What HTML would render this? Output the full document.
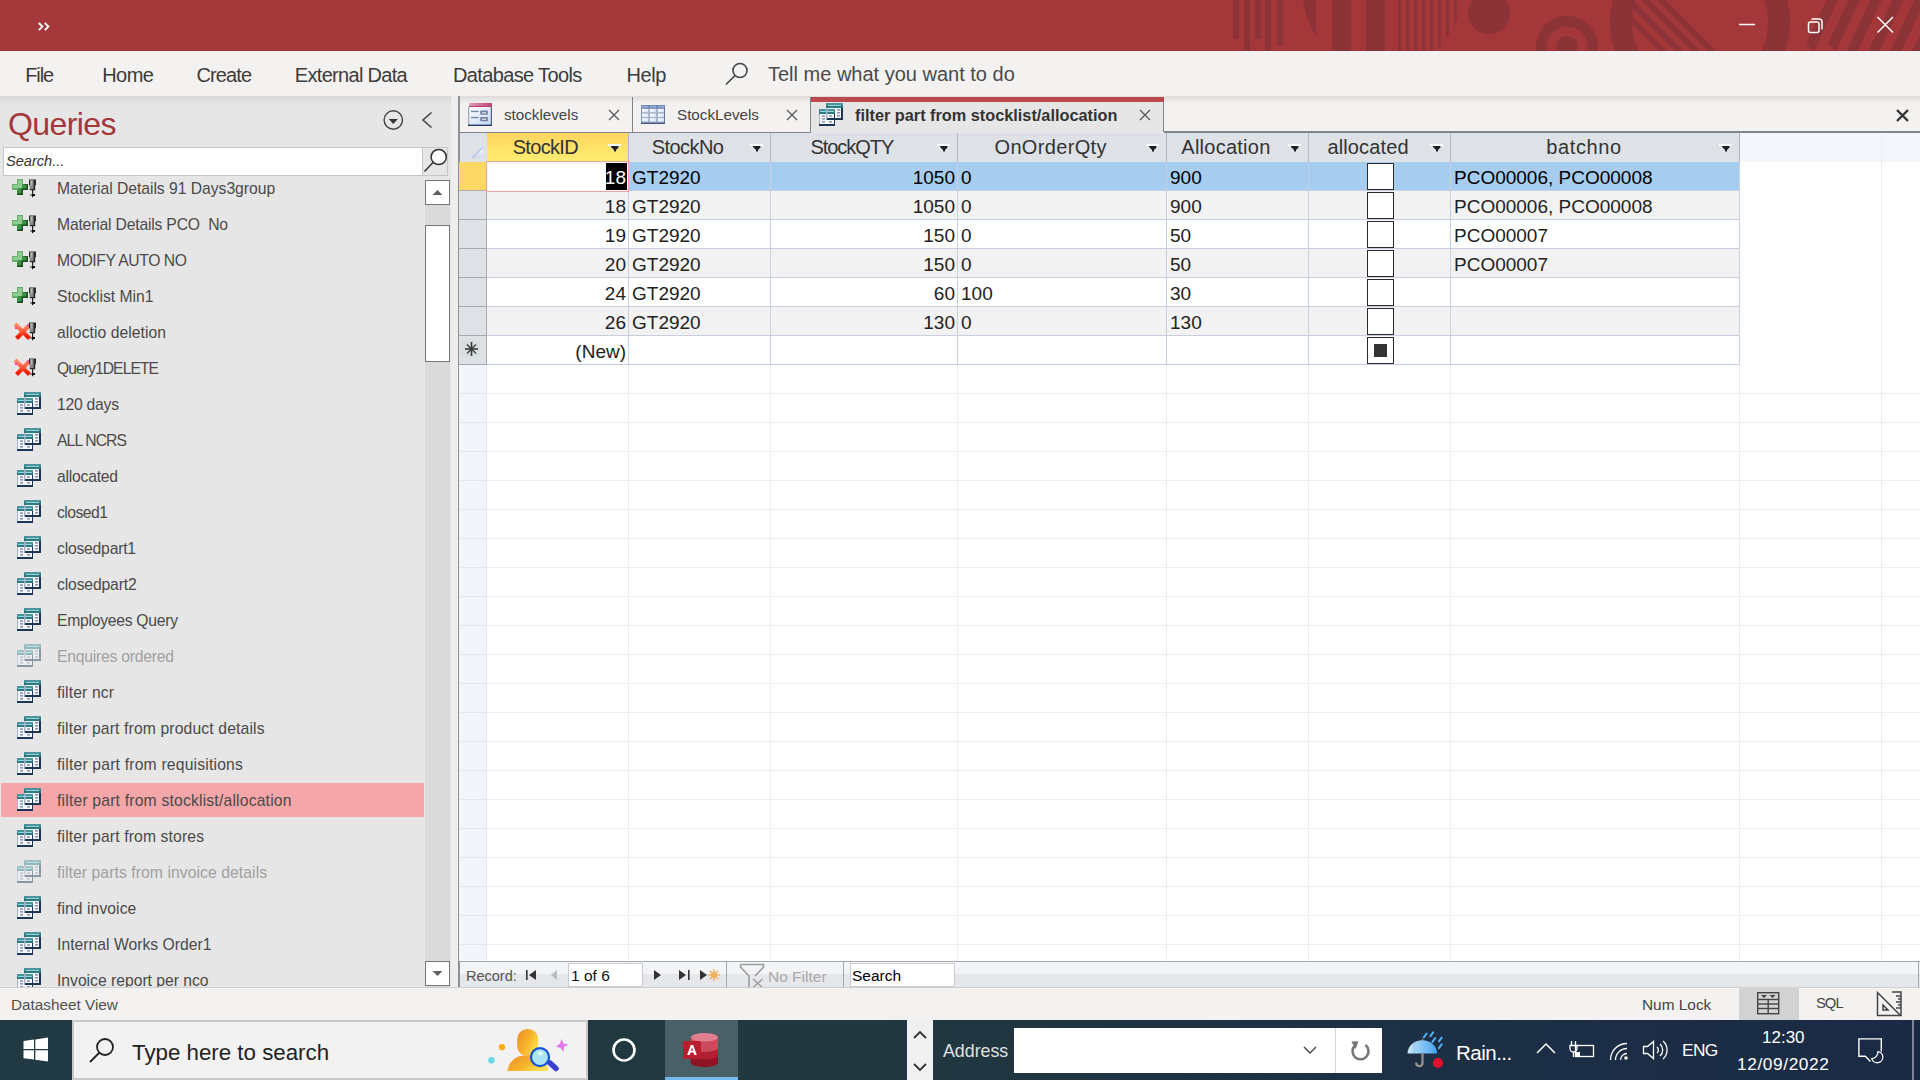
<!DOCTYPE html><html><head><meta charset="utf-8"><style>
*{margin:0;padding:0;box-sizing:border-box}
html,body{width:1920px;height:1080px;overflow:hidden;background:#f3f2f1;font-family:"Liberation Sans",sans-serif;position:relative}
.a{position:absolute}
.t{position:absolute;white-space:nowrap;line-height:1}
#title{left:0;top:0;width:1920px;height:51px;background:#a4373a;overflow:hidden}
#ribbon{left:0;top:51px;width:1920px;height:45px;background:#f3f2f1}
.rt{position:absolute;top:65px;font-size:20px;color:#3b3b3b;white-space:nowrap;line-height:1}
#nav{left:0;top:96px;width:451px;height:891px;background:#e6e6e6;overflow:hidden}
.ni{position:absolute;left:57px;font-size:15.7px;color:#4a4a4a;white-space:nowrap;line-height:36px;height:36px}
.ico{position:absolute;left:8px}
.gc{position:absolute;font-size:19px;color:#222;white-space:nowrap;line-height:1}
.hc{position:absolute;font-size:19px;color:#333;white-space:nowrap;line-height:1;text-align:center}
</style></head><body>
<div id="title" class="a"><svg width="1920" height="51" style="position:absolute;left:0;top:0">
<defs><clipPath id="inner"><circle cx="1700" cy="22" r="68"/></clipPath></defs>
<g fill="#8c3338">
<rect x="1233" y="0" width="6" height="39"/>
<rect x="1244" y="0" width="6" height="51"/>
<rect x="1255" y="0" width="6" height="39"/>
<rect x="1265" y="0" width="6" height="51"/>
<rect x="1277" y="0" width="6" height="46"/>
<path d="M1303,0 Q1306,22 1316,36 L1316,0 Z"/>
<rect x="1332" y="0" width="19" height="51"/>
<rect x="1366" y="0" width="19" height="51"/>
<rect x="1398" y="0" width="3" height="51"/>
<rect x="1406" y="0" width="3" height="51"/>
<rect x="1414" y="0" width="3" height="51"/>
<rect x="1422" y="0" width="3" height="51"/>
<rect x="1430" y="0" width="3" height="51"/>
<path d="M1438,0 h3 v45 l-3,3 Z"/>
<path d="M1446,0 h3 v35 l-3,4 Z"/>
<path d="M1454,0 h3 v20 l-3,5 Z"/>
<circle cx="1489" cy="13" r="21"/>
<path fill-rule="evenodd" d="M1536,47 a31,31 0 1,0 62,0 a31,31 0 1,0 -62,0 Z M1546.5,47 a20.5,20.5 0 1,0 41,0 a20.5,20.5 0 1,0 -41,0 Z"/>
<circle cx="1567" cy="47" r="11"/>
<path fill-rule="evenodd" d="M1610,22 a90,90 0 1,0 180,0 a90,90 0 1,0 -180,0 Z M1632,22 a68,68 0 1,0 136,0 a68,68 0 1,0 -136,0 Z"/>
<g clip-path="url(#inner)">
<path d="M1588,-20 h8 l80,80 h-8 Z"/>
<path d="M1604.5,-20 h8 l80,80 h-8 Z"/>
<path d="M1621,-20 h8 l80,80 h-8 Z"/>
<path d="M1637,-20 h8 l80,80 h-8 Z"/>
</g>
<path d="M1826.7,0 H1837.9 L1813.8,51.3 L1806.2,43.6 Z"/>
<path d="M1848.6,0 H1859.8 L1835.7,51.3 L1828.1,43.6 Z"/>
<path d="M1870.5,0 H1881.7 L1857.7,51 L1846.5,51 Z"/>
<path d="M1892.4,0 H1903.6 L1879.6,51 L1868.4,51 Z"/>
<path d="M1914.3,0 H1925.5 L1901.5,51 L1890.3,51 Z"/>
<path d="M1936.2,0 H1947.4 L1923.4,51 L1912.2,51 Z"/>
</g>
<g stroke="#fff" fill="none" stroke-width="1.5">
<line x1="1739" y1="24.5" x2="1755" y2="24.5"/>
<rect x="1808.5" y="22" width="10.5" height="10.5" rx="2"/>
<path d="M1811.5,19 h7.5 a3,3 0 0 1 3,3 v7.5"/>
<path d="M1877.5,17 L1893,32.5 M1893,17 L1877.5,32.5"/>
</g>
<g stroke="#fff" fill="none" stroke-width="1.9">
<path d="M38.8,23 l3.6,3.6 l-3.6,3.6 M44.8,23 l3.6,3.6 l-3.6,3.6"/>
</g>
</svg></div>
<div id="ribbon" class="a"></div>
<div class="rt" style="left:25.2px;letter-spacing:-1.100px">File</div>
<div class="rt" style="left:102.2px;letter-spacing:-0.533px">Home</div>
<div class="rt" style="left:196.5px;letter-spacing:-0.900px">Create</div>
<div class="rt" style="left:294.8px;letter-spacing:-0.688px">External Data</div>
<div class="rt" style="left:453.0px;letter-spacing:-0.635px">Database Tools</div>
<div class="rt" style="left:626.5px;letter-spacing:-0.433px">Help</div>
<div class="rt" style="left:768px;font-size:20px;top:64px;color:#4a4a4a">Tell me what you want to do</div>
<svg class="a" style="left:722px;top:60px" width="30" height="30"><g stroke="#444" stroke-width="1.6" fill="none"><circle cx="18" cy="10.5" r="7"/><line x1="13" y1="15.5" x2="4" y2="24.5"/></g></svg>
<div id="nav" class="a"></div>
<div class="a" style="left:0;top:96px;width:1920px;height:8px;background:linear-gradient(#d6d6d6,rgba(230,230,230,0))"></div>
<div class="a" style="left:451px;top:96px;width:7px;height:891px;background:#eeeeee"></div>
<div class="a" style="left:458px;top:96px;width:2px;height:891px;background:#8d9096"></div>
<div class="t" style="left:8px;top:107.5px;font-size:32px;letter-spacing:-0.6px;color:#a4373a">Queries</div>
<svg class="a" style="left:375px;top:104px" width="70" height="32"><g stroke="#444" stroke-width="1.4" fill="none"><circle cx="18.3" cy="16" r="9.2"/><path d="M56.5,8.5 L48,16 L56.5,23.5" stroke-width="1.6"/></g><path d="M13.8,15 h9 l-4.5,5 Z" fill="#333"/></svg>
<div class="a" style="left:3px;top:147px;width:445px;height:29px;background:#fff;border:1px solid #c6c6c6"></div>
<div class="a" style="left:422px;top:147px;width:26px;height:29px;background:#e6e6e6;border:1px solid #c6c6c6"></div>
<svg class="a" style="left:420px;top:146px" width="30" height="30"><circle cx="18.7" cy="11" r="7.6" fill="#fafafa" stroke="#333" stroke-width="1.5"/><line x1="13" y1="16.5" x2="4.5" y2="25.5" stroke="#333" stroke-width="1.5"/></svg>
<div class="t" style="left:6px;top:153.5px;font-size:14.6px;font-style:italic;color:#333">Search...</div>
<div class="a" style="left:425px;top:180px;width:25px;height:807px;background:#dadada"></div>
<div class="a" style="left:425px;top:180px;width:25px;height:25px;background:#fff;border:1px solid #767676"></div>
<svg class="a" style="left:425px;top:180px" width="25" height="25"><path d="M7.5,15 h10 l-5,-5 Z" fill="#606060"/></svg>
<div class="a" style="left:425px;top:225px;width:25px;height:137px;background:#fff;border:1px solid #767676"></div>
<div class="a" style="left:425px;top:961px;width:25px;height:25px;background:#fff;border:1px solid #767676"></div>
<svg class="a" style="left:425px;top:961px" width="25" height="25"><path d="M7.5,10 h10 l-5,5 Z" fill="#606060"/></svg>
<div class="a" style="left:1px;top:783px;width:423px;height:34px;background:#f4a6a9"></div>
<div class="a" style="left:0;top:176px;width:425px;height:811px;overflow:hidden">
<svg class="a" style="left:12px;top:3px" width="26" height="20"><path d="M5,0 h6 v5 h5 v6 h-5 v5 h-6 v-5 h-5 v-6 h5 Z" fill="#3f8f45"/>
<path d="M5,0 h6 v5 h-6 Z M0,5 h6 v6 h-6 Z" fill="#66b06a"/>
<path d="M6,1 h4 v8 h-4 Z M1,6 h9 v3 h-9 Z" fill="#8ccc8e"/>
<path d="M11,5 h5 v6 h-5 v5 h-6 v-1.5 h4.5 v-5 h5 v-3 h1.5" fill="#0f3d14" opacity="0.8"/><g transform="translate(17,0)">
<path d="M0,0.5 h7 v5.5 l-0.8,0.5 v4.8 h-5.4 v-4.8 l-0.8,-0.5 Z" fill="#2a2a2a"/>
<rect x="1" y="1" width="3.5" height="9" fill="#8a8a8a"/>
<rect x="1.8" y="1.5" width="1.5" height="5" fill="#b5b5b5"/>
<rect x="3" y="11" width="1.2" height="4.5" fill="#222"/>
<rect x="1" y="15" width="5" height="2" fill="#111"/>
<rect x="1" y="15" width="2" height="2" fill="#888"/>
<rect x="3" y="17" width="1.2" height="1.2" fill="#111"/>
</g></svg>
<div class="ni" style="top:-5px;color:#4a4a4a;letter-spacing:-0.026px">Material Details 91 Days3group</div>
<svg class="a" style="left:12px;top:39px" width="26" height="20"><path d="M5,0 h6 v5 h5 v6 h-5 v5 h-6 v-5 h-5 v-6 h5 Z" fill="#3f8f45"/>
<path d="M5,0 h6 v5 h-6 Z M0,5 h6 v6 h-6 Z" fill="#66b06a"/>
<path d="M6,1 h4 v8 h-4 Z M1,6 h9 v3 h-9 Z" fill="#8ccc8e"/>
<path d="M11,5 h5 v6 h-5 v5 h-6 v-1.5 h4.5 v-5 h5 v-3 h1.5" fill="#0f3d14" opacity="0.8"/><g transform="translate(17,0)">
<path d="M0,0.5 h7 v5.5 l-0.8,0.5 v4.8 h-5.4 v-4.8 l-0.8,-0.5 Z" fill="#2a2a2a"/>
<rect x="1" y="1" width="3.5" height="9" fill="#8a8a8a"/>
<rect x="1.8" y="1.5" width="1.5" height="5" fill="#b5b5b5"/>
<rect x="3" y="11" width="1.2" height="4.5" fill="#222"/>
<rect x="1" y="15" width="5" height="2" fill="#111"/>
<rect x="1" y="15" width="2" height="2" fill="#888"/>
<rect x="3" y="17" width="1.2" height="1.2" fill="#111"/>
</g></svg>
<div class="ni" style="top:31px;color:#4a4a4a;letter-spacing:-0.182px">Material Details PCO&nbsp; No</div>
<svg class="a" style="left:12px;top:75px" width="26" height="20"><path d="M5,0 h6 v5 h5 v6 h-5 v5 h-6 v-5 h-5 v-6 h5 Z" fill="#3f8f45"/>
<path d="M5,0 h6 v5 h-6 Z M0,5 h6 v6 h-6 Z" fill="#66b06a"/>
<path d="M6,1 h4 v8 h-4 Z M1,6 h9 v3 h-9 Z" fill="#8ccc8e"/>
<path d="M11,5 h5 v6 h-5 v5 h-6 v-1.5 h4.5 v-5 h5 v-3 h1.5" fill="#0f3d14" opacity="0.8"/><g transform="translate(17,0)">
<path d="M0,0.5 h7 v5.5 l-0.8,0.5 v4.8 h-5.4 v-4.8 l-0.8,-0.5 Z" fill="#2a2a2a"/>
<rect x="1" y="1" width="3.5" height="9" fill="#8a8a8a"/>
<rect x="1.8" y="1.5" width="1.5" height="5" fill="#b5b5b5"/>
<rect x="3" y="11" width="1.2" height="4.5" fill="#222"/>
<rect x="1" y="15" width="5" height="2" fill="#111"/>
<rect x="1" y="15" width="2" height="2" fill="#888"/>
<rect x="3" y="17" width="1.2" height="1.2" fill="#111"/>
</g></svg>
<div class="ni" style="top:67px;color:#4a4a4a;letter-spacing:-0.416px">MODIFY AUTO NO</div>
<svg class="a" style="left:12px;top:111px" width="26" height="20"><path d="M5,0 h6 v5 h5 v6 h-5 v5 h-6 v-5 h-5 v-6 h5 Z" fill="#3f8f45"/>
<path d="M5,0 h6 v5 h-6 Z M0,5 h6 v6 h-6 Z" fill="#66b06a"/>
<path d="M6,1 h4 v8 h-4 Z M1,6 h9 v3 h-9 Z" fill="#8ccc8e"/>
<path d="M11,5 h5 v6 h-5 v5 h-6 v-1.5 h4.5 v-5 h5 v-3 h1.5" fill="#0f3d14" opacity="0.8"/><g transform="translate(17,0)">
<path d="M0,0.5 h7 v5.5 l-0.8,0.5 v4.8 h-5.4 v-4.8 l-0.8,-0.5 Z" fill="#2a2a2a"/>
<rect x="1" y="1" width="3.5" height="9" fill="#8a8a8a"/>
<rect x="1.8" y="1.5" width="1.5" height="5" fill="#b5b5b5"/>
<rect x="3" y="11" width="1.2" height="4.5" fill="#222"/>
<rect x="1" y="15" width="5" height="2" fill="#111"/>
<rect x="1" y="15" width="2" height="2" fill="#888"/>
<rect x="3" y="17" width="1.2" height="1.2" fill="#111"/>
</g></svg>
<div class="ni" style="top:103px;color:#4a4a4a;letter-spacing:-0.027px">Stocklist Min1</div>
<svg class="a" style="left:13px;top:146px" width="26" height="21"><g transform="translate(2,1)"><defs><linearGradient id="xg" x1="0" y1="0" x2="0" y2="1"><stop offset="0" stop-color="#ff8a6a"/><stop offset="0.5" stop-color="#ff5a3a"/><stop offset="1" stop-color="#ee1a00"/></linearGradient></defs>
<path d="M1.5,2.5 L13,14 M13,3.5 L3,14" stroke="url(#xg)" stroke-width="4.2" stroke-linecap="square"/>
<rect x="12" y="1.5" width="2" height="2" fill="#ff3aa0"/><rect x="0" y="4" width="2" height="2" fill="#ff3aa0"/></g><g transform="translate(16,0)">
<path d="M0,0.5 h7 v5.5 l-0.8,0.5 v4.8 h-5.4 v-4.8 l-0.8,-0.5 Z" fill="#2a2a2a"/>
<rect x="1" y="1" width="3.5" height="9" fill="#8a8a8a"/>
<rect x="1.8" y="1.5" width="1.5" height="5" fill="#b5b5b5"/>
<rect x="3" y="11" width="1.2" height="4.5" fill="#222"/>
<rect x="1" y="15" width="5" height="2" fill="#111"/>
<rect x="1" y="15" width="2" height="2" fill="#888"/>
<rect x="3" y="17" width="1.2" height="1.2" fill="#111"/>
</g></svg>
<div class="ni" style="top:139px;color:#4a4a4a;letter-spacing:0.057px">alloctio deletion</div>
<svg class="a" style="left:13px;top:182px" width="26" height="21"><g transform="translate(2,1)"><defs><linearGradient id="xg" x1="0" y1="0" x2="0" y2="1"><stop offset="0" stop-color="#ff8a6a"/><stop offset="0.5" stop-color="#ff5a3a"/><stop offset="1" stop-color="#ee1a00"/></linearGradient></defs>
<path d="M1.5,2.5 L13,14 M13,3.5 L3,14" stroke="url(#xg)" stroke-width="4.2" stroke-linecap="square"/>
<rect x="12" y="1.5" width="2" height="2" fill="#ff3aa0"/><rect x="0" y="4" width="2" height="2" fill="#ff3aa0"/></g><g transform="translate(16,0)">
<path d="M0,0.5 h7 v5.5 l-0.8,0.5 v4.8 h-5.4 v-4.8 l-0.8,-0.5 Z" fill="#2a2a2a"/>
<rect x="1" y="1" width="3.5" height="9" fill="#8a8a8a"/>
<rect x="1.8" y="1.5" width="1.5" height="5" fill="#b5b5b5"/>
<rect x="3" y="11" width="1.2" height="4.5" fill="#222"/>
<rect x="1" y="15" width="5" height="2" fill="#111"/>
<rect x="1" y="15" width="2" height="2" fill="#888"/>
<rect x="3" y="17" width="1.2" height="1.2" fill="#111"/>
</g></svg>
<div class="ni" style="top:175px;color:#4a4a4a;letter-spacing:-0.950px">Query1DELETE</div>
<svg class="a" style="left:17px;top:216px;opacity:1" width="25" height="24"><g>
<rect x="7" y="0" width="17" height="17" fill="#1d3657"/>
<rect x="7" y="0" width="15" height="15" fill="#f4f7fd"/>
<rect x="7" y="0" width="17" height="5" fill="#2d7a83"/>
<rect x="7" y="0" width="17" height="2" fill="#4b9499"/>
<rect x="9" y="2" width="13" height="1" fill="#93d3dc"/>
<rect x="18" y="6" width="3" height="1.6" fill="#8d9ab5"/><rect x="18" y="9" width="3" height="1.6" fill="#8d9ab5"/><rect x="18" y="12" width="3" height="1.6" fill="#8d9ab5"/>
<rect x="0" y="6" width="16" height="17" fill="#1d3657"/>
<rect x="0" y="6" width="15" height="15" fill="#f4f7fd"/>
<rect x="0" y="6" width="16" height="5" fill="#2d7a83"/>
<rect x="0" y="6" width="16" height="2" fill="#4b9499"/>
<rect x="1" y="8" width="14" height="1" fill="#93d3dc"/>
<rect x="0" y="11" width="1" height="10" fill="#a7b3cb"/>
<rect x="3" y="12.3" width="3" height="1.6" fill="#8d9ab5"/><rect x="10" y="12.3" width="3" height="1.6" fill="#8d9ab5"/>
<rect x="3" y="15" width="3" height="1.6" fill="#8d9ab5"/>
<rect x="3" y="18" width="3" height="1.6" fill="#8d9ab5"/><rect x="10" y="18" width="3" height="1.6" fill="#8d9ab5"/>
<rect x="7" y="5" width="1.5" height="12" fill="#a7b3cb"/>
<rect x="8" y="15" width="16" height="2" fill="#1d3657"/>
</g></svg>
<div class="ni" style="top:211px;color:#4a4a4a;letter-spacing:-0.234px">120 days</div>
<svg class="a" style="left:17px;top:252px;opacity:1" width="25" height="24"><g>
<rect x="7" y="0" width="17" height="17" fill="#1d3657"/>
<rect x="7" y="0" width="15" height="15" fill="#f4f7fd"/>
<rect x="7" y="0" width="17" height="5" fill="#2d7a83"/>
<rect x="7" y="0" width="17" height="2" fill="#4b9499"/>
<rect x="9" y="2" width="13" height="1" fill="#93d3dc"/>
<rect x="18" y="6" width="3" height="1.6" fill="#8d9ab5"/><rect x="18" y="9" width="3" height="1.6" fill="#8d9ab5"/><rect x="18" y="12" width="3" height="1.6" fill="#8d9ab5"/>
<rect x="0" y="6" width="16" height="17" fill="#1d3657"/>
<rect x="0" y="6" width="15" height="15" fill="#f4f7fd"/>
<rect x="0" y="6" width="16" height="5" fill="#2d7a83"/>
<rect x="0" y="6" width="16" height="2" fill="#4b9499"/>
<rect x="1" y="8" width="14" height="1" fill="#93d3dc"/>
<rect x="0" y="11" width="1" height="10" fill="#a7b3cb"/>
<rect x="3" y="12.3" width="3" height="1.6" fill="#8d9ab5"/><rect x="10" y="12.3" width="3" height="1.6" fill="#8d9ab5"/>
<rect x="3" y="15" width="3" height="1.6" fill="#8d9ab5"/>
<rect x="3" y="18" width="3" height="1.6" fill="#8d9ab5"/><rect x="10" y="18" width="3" height="1.6" fill="#8d9ab5"/>
<rect x="7" y="5" width="1.5" height="12" fill="#a7b3cb"/>
<rect x="8" y="15" width="16" height="2" fill="#1d3657"/>
</g></svg>
<div class="ni" style="top:247px;color:#4a4a4a;letter-spacing:-0.877px">ALL NCRS</div>
<svg class="a" style="left:17px;top:288px;opacity:1" width="25" height="24"><g>
<rect x="7" y="0" width="17" height="17" fill="#1d3657"/>
<rect x="7" y="0" width="15" height="15" fill="#f4f7fd"/>
<rect x="7" y="0" width="17" height="5" fill="#2d7a83"/>
<rect x="7" y="0" width="17" height="2" fill="#4b9499"/>
<rect x="9" y="2" width="13" height="1" fill="#93d3dc"/>
<rect x="18" y="6" width="3" height="1.6" fill="#8d9ab5"/><rect x="18" y="9" width="3" height="1.6" fill="#8d9ab5"/><rect x="18" y="12" width="3" height="1.6" fill="#8d9ab5"/>
<rect x="0" y="6" width="16" height="17" fill="#1d3657"/>
<rect x="0" y="6" width="15" height="15" fill="#f4f7fd"/>
<rect x="0" y="6" width="16" height="5" fill="#2d7a83"/>
<rect x="0" y="6" width="16" height="2" fill="#4b9499"/>
<rect x="1" y="8" width="14" height="1" fill="#93d3dc"/>
<rect x="0" y="11" width="1" height="10" fill="#a7b3cb"/>
<rect x="3" y="12.3" width="3" height="1.6" fill="#8d9ab5"/><rect x="10" y="12.3" width="3" height="1.6" fill="#8d9ab5"/>
<rect x="3" y="15" width="3" height="1.6" fill="#8d9ab5"/>
<rect x="3" y="18" width="3" height="1.6" fill="#8d9ab5"/><rect x="10" y="18" width="3" height="1.6" fill="#8d9ab5"/>
<rect x="7" y="5" width="1.5" height="12" fill="#a7b3cb"/>
<rect x="8" y="15" width="16" height="2" fill="#1d3657"/>
</g></svg>
<div class="ni" style="top:283px;color:#4a4a4a;letter-spacing:-0.221px">allocated</div>
<svg class="a" style="left:17px;top:324px;opacity:1" width="25" height="24"><g>
<rect x="7" y="0" width="17" height="17" fill="#1d3657"/>
<rect x="7" y="0" width="15" height="15" fill="#f4f7fd"/>
<rect x="7" y="0" width="17" height="5" fill="#2d7a83"/>
<rect x="7" y="0" width="17" height="2" fill="#4b9499"/>
<rect x="9" y="2" width="13" height="1" fill="#93d3dc"/>
<rect x="18" y="6" width="3" height="1.6" fill="#8d9ab5"/><rect x="18" y="9" width="3" height="1.6" fill="#8d9ab5"/><rect x="18" y="12" width="3" height="1.6" fill="#8d9ab5"/>
<rect x="0" y="6" width="16" height="17" fill="#1d3657"/>
<rect x="0" y="6" width="15" height="15" fill="#f4f7fd"/>
<rect x="0" y="6" width="16" height="5" fill="#2d7a83"/>
<rect x="0" y="6" width="16" height="2" fill="#4b9499"/>
<rect x="1" y="8" width="14" height="1" fill="#93d3dc"/>
<rect x="0" y="11" width="1" height="10" fill="#a7b3cb"/>
<rect x="3" y="12.3" width="3" height="1.6" fill="#8d9ab5"/><rect x="10" y="12.3" width="3" height="1.6" fill="#8d9ab5"/>
<rect x="3" y="15" width="3" height="1.6" fill="#8d9ab5"/>
<rect x="3" y="18" width="3" height="1.6" fill="#8d9ab5"/><rect x="10" y="18" width="3" height="1.6" fill="#8d9ab5"/>
<rect x="7" y="5" width="1.5" height="12" fill="#a7b3cb"/>
<rect x="8" y="15" width="16" height="2" fill="#1d3657"/>
</g></svg>
<div class="ni" style="top:319px;color:#4a4a4a;letter-spacing:-0.508px">closed1</div>
<svg class="a" style="left:17px;top:360px;opacity:1" width="25" height="24"><g>
<rect x="7" y="0" width="17" height="17" fill="#1d3657"/>
<rect x="7" y="0" width="15" height="15" fill="#f4f7fd"/>
<rect x="7" y="0" width="17" height="5" fill="#2d7a83"/>
<rect x="7" y="0" width="17" height="2" fill="#4b9499"/>
<rect x="9" y="2" width="13" height="1" fill="#93d3dc"/>
<rect x="18" y="6" width="3" height="1.6" fill="#8d9ab5"/><rect x="18" y="9" width="3" height="1.6" fill="#8d9ab5"/><rect x="18" y="12" width="3" height="1.6" fill="#8d9ab5"/>
<rect x="0" y="6" width="16" height="17" fill="#1d3657"/>
<rect x="0" y="6" width="15" height="15" fill="#f4f7fd"/>
<rect x="0" y="6" width="16" height="5" fill="#2d7a83"/>
<rect x="0" y="6" width="16" height="2" fill="#4b9499"/>
<rect x="1" y="8" width="14" height="1" fill="#93d3dc"/>
<rect x="0" y="11" width="1" height="10" fill="#a7b3cb"/>
<rect x="3" y="12.3" width="3" height="1.6" fill="#8d9ab5"/><rect x="10" y="12.3" width="3" height="1.6" fill="#8d9ab5"/>
<rect x="3" y="15" width="3" height="1.6" fill="#8d9ab5"/>
<rect x="3" y="18" width="3" height="1.6" fill="#8d9ab5"/><rect x="10" y="18" width="3" height="1.6" fill="#8d9ab5"/>
<rect x="7" y="5" width="1.5" height="12" fill="#a7b3cb"/>
<rect x="8" y="15" width="16" height="2" fill="#1d3657"/>
</g></svg>
<div class="ni" style="top:355px;color:#4a4a4a;letter-spacing:-0.206px">closedpart1</div>
<svg class="a" style="left:17px;top:396px;opacity:1" width="25" height="24"><g>
<rect x="7" y="0" width="17" height="17" fill="#1d3657"/>
<rect x="7" y="0" width="15" height="15" fill="#f4f7fd"/>
<rect x="7" y="0" width="17" height="5" fill="#2d7a83"/>
<rect x="7" y="0" width="17" height="2" fill="#4b9499"/>
<rect x="9" y="2" width="13" height="1" fill="#93d3dc"/>
<rect x="18" y="6" width="3" height="1.6" fill="#8d9ab5"/><rect x="18" y="9" width="3" height="1.6" fill="#8d9ab5"/><rect x="18" y="12" width="3" height="1.6" fill="#8d9ab5"/>
<rect x="0" y="6" width="16" height="17" fill="#1d3657"/>
<rect x="0" y="6" width="15" height="15" fill="#f4f7fd"/>
<rect x="0" y="6" width="16" height="5" fill="#2d7a83"/>
<rect x="0" y="6" width="16" height="2" fill="#4b9499"/>
<rect x="1" y="8" width="14" height="1" fill="#93d3dc"/>
<rect x="0" y="11" width="1" height="10" fill="#a7b3cb"/>
<rect x="3" y="12.3" width="3" height="1.6" fill="#8d9ab5"/><rect x="10" y="12.3" width="3" height="1.6" fill="#8d9ab5"/>
<rect x="3" y="15" width="3" height="1.6" fill="#8d9ab5"/>
<rect x="3" y="18" width="3" height="1.6" fill="#8d9ab5"/><rect x="10" y="18" width="3" height="1.6" fill="#8d9ab5"/>
<rect x="7" y="5" width="1.5" height="12" fill="#a7b3cb"/>
<rect x="8" y="15" width="16" height="2" fill="#1d3657"/>
</g></svg>
<div class="ni" style="top:391px;color:#4a4a4a;letter-spacing:-0.136px">closedpart2</div>
<svg class="a" style="left:17px;top:432px;opacity:1" width="25" height="24"><g>
<rect x="7" y="0" width="17" height="17" fill="#1d3657"/>
<rect x="7" y="0" width="15" height="15" fill="#f4f7fd"/>
<rect x="7" y="0" width="17" height="5" fill="#2d7a83"/>
<rect x="7" y="0" width="17" height="2" fill="#4b9499"/>
<rect x="9" y="2" width="13" height="1" fill="#93d3dc"/>
<rect x="18" y="6" width="3" height="1.6" fill="#8d9ab5"/><rect x="18" y="9" width="3" height="1.6" fill="#8d9ab5"/><rect x="18" y="12" width="3" height="1.6" fill="#8d9ab5"/>
<rect x="0" y="6" width="16" height="17" fill="#1d3657"/>
<rect x="0" y="6" width="15" height="15" fill="#f4f7fd"/>
<rect x="0" y="6" width="16" height="5" fill="#2d7a83"/>
<rect x="0" y="6" width="16" height="2" fill="#4b9499"/>
<rect x="1" y="8" width="14" height="1" fill="#93d3dc"/>
<rect x="0" y="11" width="1" height="10" fill="#a7b3cb"/>
<rect x="3" y="12.3" width="3" height="1.6" fill="#8d9ab5"/><rect x="10" y="12.3" width="3" height="1.6" fill="#8d9ab5"/>
<rect x="3" y="15" width="3" height="1.6" fill="#8d9ab5"/>
<rect x="3" y="18" width="3" height="1.6" fill="#8d9ab5"/><rect x="10" y="18" width="3" height="1.6" fill="#8d9ab5"/>
<rect x="7" y="5" width="1.5" height="12" fill="#a7b3cb"/>
<rect x="8" y="15" width="16" height="2" fill="#1d3657"/>
</g></svg>
<div class="ni" style="top:427px;color:#4a4a4a;letter-spacing:-0.260px">Employees Query</div>
<svg class="a" style="left:17px;top:468px;opacity:0.45" width="25" height="24"><g>
<rect x="7" y="0" width="17" height="17" fill="#1d3657"/>
<rect x="7" y="0" width="15" height="15" fill="#f4f7fd"/>
<rect x="7" y="0" width="17" height="5" fill="#2d7a83"/>
<rect x="7" y="0" width="17" height="2" fill="#4b9499"/>
<rect x="9" y="2" width="13" height="1" fill="#93d3dc"/>
<rect x="18" y="6" width="3" height="1.6" fill="#8d9ab5"/><rect x="18" y="9" width="3" height="1.6" fill="#8d9ab5"/><rect x="18" y="12" width="3" height="1.6" fill="#8d9ab5"/>
<rect x="0" y="6" width="16" height="17" fill="#1d3657"/>
<rect x="0" y="6" width="15" height="15" fill="#f4f7fd"/>
<rect x="0" y="6" width="16" height="5" fill="#2d7a83"/>
<rect x="0" y="6" width="16" height="2" fill="#4b9499"/>
<rect x="1" y="8" width="14" height="1" fill="#93d3dc"/>
<rect x="0" y="11" width="1" height="10" fill="#a7b3cb"/>
<rect x="3" y="12.3" width="3" height="1.6" fill="#8d9ab5"/><rect x="10" y="12.3" width="3" height="1.6" fill="#8d9ab5"/>
<rect x="3" y="15" width="3" height="1.6" fill="#8d9ab5"/>
<rect x="3" y="18" width="3" height="1.6" fill="#8d9ab5"/><rect x="10" y="18" width="3" height="1.6" fill="#8d9ab5"/>
<rect x="7" y="5" width="1.5" height="12" fill="#a7b3cb"/>
<rect x="8" y="15" width="16" height="2" fill="#1d3657"/>
</g></svg>
<div class="ni" style="top:463px;color:#a0a0a0;letter-spacing:-0.219px">Enquires ordered</div>
<svg class="a" style="left:17px;top:504px;opacity:1" width="25" height="24"><g>
<rect x="7" y="0" width="17" height="17" fill="#1d3657"/>
<rect x="7" y="0" width="15" height="15" fill="#f4f7fd"/>
<rect x="7" y="0" width="17" height="5" fill="#2d7a83"/>
<rect x="7" y="0" width="17" height="2" fill="#4b9499"/>
<rect x="9" y="2" width="13" height="1" fill="#93d3dc"/>
<rect x="18" y="6" width="3" height="1.6" fill="#8d9ab5"/><rect x="18" y="9" width="3" height="1.6" fill="#8d9ab5"/><rect x="18" y="12" width="3" height="1.6" fill="#8d9ab5"/>
<rect x="0" y="6" width="16" height="17" fill="#1d3657"/>
<rect x="0" y="6" width="15" height="15" fill="#f4f7fd"/>
<rect x="0" y="6" width="16" height="5" fill="#2d7a83"/>
<rect x="0" y="6" width="16" height="2" fill="#4b9499"/>
<rect x="1" y="8" width="14" height="1" fill="#93d3dc"/>
<rect x="0" y="11" width="1" height="10" fill="#a7b3cb"/>
<rect x="3" y="12.3" width="3" height="1.6" fill="#8d9ab5"/><rect x="10" y="12.3" width="3" height="1.6" fill="#8d9ab5"/>
<rect x="3" y="15" width="3" height="1.6" fill="#8d9ab5"/>
<rect x="3" y="18" width="3" height="1.6" fill="#8d9ab5"/><rect x="10" y="18" width="3" height="1.6" fill="#8d9ab5"/>
<rect x="7" y="5" width="1.5" height="12" fill="#a7b3cb"/>
<rect x="8" y="15" width="16" height="2" fill="#1d3657"/>
</g></svg>
<div class="ni" style="top:499px;color:#4a4a4a;letter-spacing:0.137px">filter ncr</div>
<svg class="a" style="left:17px;top:540px;opacity:1" width="25" height="24"><g>
<rect x="7" y="0" width="17" height="17" fill="#1d3657"/>
<rect x="7" y="0" width="15" height="15" fill="#f4f7fd"/>
<rect x="7" y="0" width="17" height="5" fill="#2d7a83"/>
<rect x="7" y="0" width="17" height="2" fill="#4b9499"/>
<rect x="9" y="2" width="13" height="1" fill="#93d3dc"/>
<rect x="18" y="6" width="3" height="1.6" fill="#8d9ab5"/><rect x="18" y="9" width="3" height="1.6" fill="#8d9ab5"/><rect x="18" y="12" width="3" height="1.6" fill="#8d9ab5"/>
<rect x="0" y="6" width="16" height="17" fill="#1d3657"/>
<rect x="0" y="6" width="15" height="15" fill="#f4f7fd"/>
<rect x="0" y="6" width="16" height="5" fill="#2d7a83"/>
<rect x="0" y="6" width="16" height="2" fill="#4b9499"/>
<rect x="1" y="8" width="14" height="1" fill="#93d3dc"/>
<rect x="0" y="11" width="1" height="10" fill="#a7b3cb"/>
<rect x="3" y="12.3" width="3" height="1.6" fill="#8d9ab5"/><rect x="10" y="12.3" width="3" height="1.6" fill="#8d9ab5"/>
<rect x="3" y="15" width="3" height="1.6" fill="#8d9ab5"/>
<rect x="3" y="18" width="3" height="1.6" fill="#8d9ab5"/><rect x="10" y="18" width="3" height="1.6" fill="#8d9ab5"/>
<rect x="7" y="5" width="1.5" height="12" fill="#a7b3cb"/>
<rect x="8" y="15" width="16" height="2" fill="#1d3657"/>
</g></svg>
<div class="ni" style="top:535px;color:#4a4a4a;letter-spacing:0.140px">filter part from product details</div>
<svg class="a" style="left:17px;top:576px;opacity:1" width="25" height="24"><g>
<rect x="7" y="0" width="17" height="17" fill="#1d3657"/>
<rect x="7" y="0" width="15" height="15" fill="#f4f7fd"/>
<rect x="7" y="0" width="17" height="5" fill="#2d7a83"/>
<rect x="7" y="0" width="17" height="2" fill="#4b9499"/>
<rect x="9" y="2" width="13" height="1" fill="#93d3dc"/>
<rect x="18" y="6" width="3" height="1.6" fill="#8d9ab5"/><rect x="18" y="9" width="3" height="1.6" fill="#8d9ab5"/><rect x="18" y="12" width="3" height="1.6" fill="#8d9ab5"/>
<rect x="0" y="6" width="16" height="17" fill="#1d3657"/>
<rect x="0" y="6" width="15" height="15" fill="#f4f7fd"/>
<rect x="0" y="6" width="16" height="5" fill="#2d7a83"/>
<rect x="0" y="6" width="16" height="2" fill="#4b9499"/>
<rect x="1" y="8" width="14" height="1" fill="#93d3dc"/>
<rect x="0" y="11" width="1" height="10" fill="#a7b3cb"/>
<rect x="3" y="12.3" width="3" height="1.6" fill="#8d9ab5"/><rect x="10" y="12.3" width="3" height="1.6" fill="#8d9ab5"/>
<rect x="3" y="15" width="3" height="1.6" fill="#8d9ab5"/>
<rect x="3" y="18" width="3" height="1.6" fill="#8d9ab5"/><rect x="10" y="18" width="3" height="1.6" fill="#8d9ab5"/>
<rect x="7" y="5" width="1.5" height="12" fill="#a7b3cb"/>
<rect x="8" y="15" width="16" height="2" fill="#1d3657"/>
</g></svg>
<div class="ni" style="top:571px;color:#4a4a4a;letter-spacing:0.193px">filter part from requisitions</div>
<svg class="a" style="left:17px;top:612px;opacity:1" width="25" height="24"><g>
<rect x="7" y="0" width="17" height="17" fill="#1d3657"/>
<rect x="7" y="0" width="15" height="15" fill="#f4f7fd"/>
<rect x="7" y="0" width="17" height="5" fill="#2d7a83"/>
<rect x="7" y="0" width="17" height="2" fill="#4b9499"/>
<rect x="9" y="2" width="13" height="1" fill="#93d3dc"/>
<rect x="18" y="6" width="3" height="1.6" fill="#8d9ab5"/><rect x="18" y="9" width="3" height="1.6" fill="#8d9ab5"/><rect x="18" y="12" width="3" height="1.6" fill="#8d9ab5"/>
<rect x="0" y="6" width="16" height="17" fill="#1d3657"/>
<rect x="0" y="6" width="15" height="15" fill="#f4f7fd"/>
<rect x="0" y="6" width="16" height="5" fill="#2d7a83"/>
<rect x="0" y="6" width="16" height="2" fill="#4b9499"/>
<rect x="1" y="8" width="14" height="1" fill="#93d3dc"/>
<rect x="0" y="11" width="1" height="10" fill="#a7b3cb"/>
<rect x="3" y="12.3" width="3" height="1.6" fill="#8d9ab5"/><rect x="10" y="12.3" width="3" height="1.6" fill="#8d9ab5"/>
<rect x="3" y="15" width="3" height="1.6" fill="#8d9ab5"/>
<rect x="3" y="18" width="3" height="1.6" fill="#8d9ab5"/><rect x="10" y="18" width="3" height="1.6" fill="#8d9ab5"/>
<rect x="7" y="5" width="1.5" height="12" fill="#a7b3cb"/>
<rect x="8" y="15" width="16" height="2" fill="#1d3657"/>
</g></svg>
<div class="ni" style="top:607px;color:#4a4a4a;letter-spacing:0.193px">filter part from stocklist/allocation</div>
<svg class="a" style="left:17px;top:648px;opacity:1" width="25" height="24"><g>
<rect x="7" y="0" width="17" height="17" fill="#1d3657"/>
<rect x="7" y="0" width="15" height="15" fill="#f4f7fd"/>
<rect x="7" y="0" width="17" height="5" fill="#2d7a83"/>
<rect x="7" y="0" width="17" height="2" fill="#4b9499"/>
<rect x="9" y="2" width="13" height="1" fill="#93d3dc"/>
<rect x="18" y="6" width="3" height="1.6" fill="#8d9ab5"/><rect x="18" y="9" width="3" height="1.6" fill="#8d9ab5"/><rect x="18" y="12" width="3" height="1.6" fill="#8d9ab5"/>
<rect x="0" y="6" width="16" height="17" fill="#1d3657"/>
<rect x="0" y="6" width="15" height="15" fill="#f4f7fd"/>
<rect x="0" y="6" width="16" height="5" fill="#2d7a83"/>
<rect x="0" y="6" width="16" height="2" fill="#4b9499"/>
<rect x="1" y="8" width="14" height="1" fill="#93d3dc"/>
<rect x="0" y="11" width="1" height="10" fill="#a7b3cb"/>
<rect x="3" y="12.3" width="3" height="1.6" fill="#8d9ab5"/><rect x="10" y="12.3" width="3" height="1.6" fill="#8d9ab5"/>
<rect x="3" y="15" width="3" height="1.6" fill="#8d9ab5"/>
<rect x="3" y="18" width="3" height="1.6" fill="#8d9ab5"/><rect x="10" y="18" width="3" height="1.6" fill="#8d9ab5"/>
<rect x="7" y="5" width="1.5" height="12" fill="#a7b3cb"/>
<rect x="8" y="15" width="16" height="2" fill="#1d3657"/>
</g></svg>
<div class="ni" style="top:643px;color:#4a4a4a;letter-spacing:0.146px">filter part from stores</div>
<svg class="a" style="left:17px;top:684px;opacity:0.45" width="25" height="24"><g>
<rect x="7" y="0" width="17" height="17" fill="#1d3657"/>
<rect x="7" y="0" width="15" height="15" fill="#f4f7fd"/>
<rect x="7" y="0" width="17" height="5" fill="#2d7a83"/>
<rect x="7" y="0" width="17" height="2" fill="#4b9499"/>
<rect x="9" y="2" width="13" height="1" fill="#93d3dc"/>
<rect x="18" y="6" width="3" height="1.6" fill="#8d9ab5"/><rect x="18" y="9" width="3" height="1.6" fill="#8d9ab5"/><rect x="18" y="12" width="3" height="1.6" fill="#8d9ab5"/>
<rect x="0" y="6" width="16" height="17" fill="#1d3657"/>
<rect x="0" y="6" width="15" height="15" fill="#f4f7fd"/>
<rect x="0" y="6" width="16" height="5" fill="#2d7a83"/>
<rect x="0" y="6" width="16" height="2" fill="#4b9499"/>
<rect x="1" y="8" width="14" height="1" fill="#93d3dc"/>
<rect x="0" y="11" width="1" height="10" fill="#a7b3cb"/>
<rect x="3" y="12.3" width="3" height="1.6" fill="#8d9ab5"/><rect x="10" y="12.3" width="3" height="1.6" fill="#8d9ab5"/>
<rect x="3" y="15" width="3" height="1.6" fill="#8d9ab5"/>
<rect x="3" y="18" width="3" height="1.6" fill="#8d9ab5"/><rect x="10" y="18" width="3" height="1.6" fill="#8d9ab5"/>
<rect x="7" y="5" width="1.5" height="12" fill="#a7b3cb"/>
<rect x="8" y="15" width="16" height="2" fill="#1d3657"/>
</g></svg>
<div class="ni" style="top:679px;color:#a0a0a0;letter-spacing:0.081px">filter parts from invoice details</div>
<svg class="a" style="left:17px;top:720px;opacity:1" width="25" height="24"><g>
<rect x="7" y="0" width="17" height="17" fill="#1d3657"/>
<rect x="7" y="0" width="15" height="15" fill="#f4f7fd"/>
<rect x="7" y="0" width="17" height="5" fill="#2d7a83"/>
<rect x="7" y="0" width="17" height="2" fill="#4b9499"/>
<rect x="9" y="2" width="13" height="1" fill="#93d3dc"/>
<rect x="18" y="6" width="3" height="1.6" fill="#8d9ab5"/><rect x="18" y="9" width="3" height="1.6" fill="#8d9ab5"/><rect x="18" y="12" width="3" height="1.6" fill="#8d9ab5"/>
<rect x="0" y="6" width="16" height="17" fill="#1d3657"/>
<rect x="0" y="6" width="15" height="15" fill="#f4f7fd"/>
<rect x="0" y="6" width="16" height="5" fill="#2d7a83"/>
<rect x="0" y="6" width="16" height="2" fill="#4b9499"/>
<rect x="1" y="8" width="14" height="1" fill="#93d3dc"/>
<rect x="0" y="11" width="1" height="10" fill="#a7b3cb"/>
<rect x="3" y="12.3" width="3" height="1.6" fill="#8d9ab5"/><rect x="10" y="12.3" width="3" height="1.6" fill="#8d9ab5"/>
<rect x="3" y="15" width="3" height="1.6" fill="#8d9ab5"/>
<rect x="3" y="18" width="3" height="1.6" fill="#8d9ab5"/><rect x="10" y="18" width="3" height="1.6" fill="#8d9ab5"/>
<rect x="7" y="5" width="1.5" height="12" fill="#a7b3cb"/>
<rect x="8" y="15" width="16" height="2" fill="#1d3657"/>
</g></svg>
<div class="ni" style="top:715px;color:#4a4a4a;letter-spacing:0.077px">find invoice</div>
<svg class="a" style="left:17px;top:756px;opacity:1" width="25" height="24"><g>
<rect x="7" y="0" width="17" height="17" fill="#1d3657"/>
<rect x="7" y="0" width="15" height="15" fill="#f4f7fd"/>
<rect x="7" y="0" width="17" height="5" fill="#2d7a83"/>
<rect x="7" y="0" width="17" height="2" fill="#4b9499"/>
<rect x="9" y="2" width="13" height="1" fill="#93d3dc"/>
<rect x="18" y="6" width="3" height="1.6" fill="#8d9ab5"/><rect x="18" y="9" width="3" height="1.6" fill="#8d9ab5"/><rect x="18" y="12" width="3" height="1.6" fill="#8d9ab5"/>
<rect x="0" y="6" width="16" height="17" fill="#1d3657"/>
<rect x="0" y="6" width="15" height="15" fill="#f4f7fd"/>
<rect x="0" y="6" width="16" height="5" fill="#2d7a83"/>
<rect x="0" y="6" width="16" height="2" fill="#4b9499"/>
<rect x="1" y="8" width="14" height="1" fill="#93d3dc"/>
<rect x="0" y="11" width="1" height="10" fill="#a7b3cb"/>
<rect x="3" y="12.3" width="3" height="1.6" fill="#8d9ab5"/><rect x="10" y="12.3" width="3" height="1.6" fill="#8d9ab5"/>
<rect x="3" y="15" width="3" height="1.6" fill="#8d9ab5"/>
<rect x="3" y="18" width="3" height="1.6" fill="#8d9ab5"/><rect x="10" y="18" width="3" height="1.6" fill="#8d9ab5"/>
<rect x="7" y="5" width="1.5" height="12" fill="#a7b3cb"/>
<rect x="8" y="15" width="16" height="2" fill="#1d3657"/>
</g></svg>
<div class="ni" style="top:751px;color:#4a4a4a;letter-spacing:0.027px">Internal Works Order1</div>
<svg class="a" style="left:17px;top:792px;opacity:1" width="25" height="24"><g>
<rect x="7" y="0" width="17" height="17" fill="#1d3657"/>
<rect x="7" y="0" width="15" height="15" fill="#f4f7fd"/>
<rect x="7" y="0" width="17" height="5" fill="#2d7a83"/>
<rect x="7" y="0" width="17" height="2" fill="#4b9499"/>
<rect x="9" y="2" width="13" height="1" fill="#93d3dc"/>
<rect x="18" y="6" width="3" height="1.6" fill="#8d9ab5"/><rect x="18" y="9" width="3" height="1.6" fill="#8d9ab5"/><rect x="18" y="12" width="3" height="1.6" fill="#8d9ab5"/>
<rect x="0" y="6" width="16" height="17" fill="#1d3657"/>
<rect x="0" y="6" width="15" height="15" fill="#f4f7fd"/>
<rect x="0" y="6" width="16" height="5" fill="#2d7a83"/>
<rect x="0" y="6" width="16" height="2" fill="#4b9499"/>
<rect x="1" y="8" width="14" height="1" fill="#93d3dc"/>
<rect x="0" y="11" width="1" height="10" fill="#a7b3cb"/>
<rect x="3" y="12.3" width="3" height="1.6" fill="#8d9ab5"/><rect x="10" y="12.3" width="3" height="1.6" fill="#8d9ab5"/>
<rect x="3" y="15" width="3" height="1.6" fill="#8d9ab5"/>
<rect x="3" y="18" width="3" height="1.6" fill="#8d9ab5"/><rect x="10" y="18" width="3" height="1.6" fill="#8d9ab5"/>
<rect x="7" y="5" width="1.5" height="12" fill="#a7b3cb"/>
<rect x="8" y="15" width="16" height="2" fill="#1d3657"/>
</g></svg>
<div class="ni" style="top:787px;color:#4a4a4a;letter-spacing:-0.007px">Invoice report per nco</div>
</div>

<div class="a" style="left:460px;top:96px;width:1460px;height:891px;background:#fff"></div>
<div class="a" style="left:460px;top:96px;width:1460px;height:37px;background:#f3f2f1"></div>
<div class="a" style="left:460px;top:96px;width:1460px;height:8px;background:linear-gradient(#dcdbda,rgba(243,242,241,0))"></div>
<div class="a" style="left:460px;top:132px;width:351px;height:1px;background:#7f858c"></div>
<div class="a" style="left:1164px;top:131px;width:756px;height:2px;background:#7f858c"></div>
<div class="a" style="left:632px;top:97px;width:1px;height:35px;background:#7f858c"></div>
<div class="a" style="left:810px;top:97px;width:1px;height:36px;background:#7f858c"></div>
<div class="a" style="left:1163px;top:97px;width:1px;height:35px;background:#7f858c"></div>
<div class="a" style="left:811px;top:97px;width:352px;height:36px;background:#e6e6e6"></div>
<div class="a" style="left:811px;top:97px;width:353px;height:5px;background:#bb4a4e"></div>
<svg class="a" style="left:468px;top:103px" width="24" height="23">
<defs><linearGradient id="fg" x1="0" y1="0" x2="1" y2="1"><stop offset="0" stop-color="#ffffff"/><stop offset="1" stop-color="#c3d3f6"/></linearGradient>
<linearGradient id="ph" x1="0" y1="0" x2="1" y2="0"><stop offset="0" stop-color="#dca0b8"/><stop offset="1" stop-color="#bd4270"/></linearGradient></defs>
<rect x="1" y="0" width="23" height="4.1" fill="url(#ph)"/>
<rect x="1" y="3" width="23" height="1.1" fill="#c43d6e"/>
<rect x="0" y="4" width="24" height="19" fill="url(#fg)"/>
<rect x="0" y="4" width="1.2" height="19" fill="#98a9c2"/>
<rect x="22.8" y="4" width="1.2" height="19" fill="#4d6286"/>
<rect x="0" y="21.6" width="24" height="1.4" fill="#263b5e"/>
<rect x="3" y="7.8" width="7.5" height="1.3" fill="#6f85b0"/><rect x="3" y="13.9" width="7.5" height="1.3" fill="#6f85b0"/>
<rect x="12.2" y="7.6" width="7.7" height="4.2" rx="0.8" fill="#6f81a2"/><rect x="14" y="9" width="4.2" height="1.5" fill="#c9d2de"/>
<rect x="12.2" y="14" width="7.7" height="4.3" rx="0.8" fill="#6f81a2"/><rect x="14" y="15.5" width="4.2" height="1.5" fill="#c9d2de"/>
</svg>
<svg class="a" style="left:641px;top:105px" width="24" height="19">
<defs><linearGradient id="cg" x1="0" y1="0" x2="1" y2="1"><stop offset="0" stop-color="#ffffff"/><stop offset="1" stop-color="#d6e2fa"/></linearGradient></defs>
<rect x="0" y="0" width="24" height="19" fill="#a3b2c9"/>
<rect x="0" y="0" width="24" height="3.6" fill="#6f87ba"/>
<rect x="1" y="1.2" width="6" height="1.2" fill="#a9b9da"/><rect x="9" y="1.2" width="6" height="1.2" fill="#a9b9da"/><rect x="17" y="1.2" width="6" height="1.2" fill="#a9b9da"/>
<g fill="url(#cg)">
<rect x="1.1" y="4" width="6" height="3.2"/><rect x="8.9" y="4" width="6" height="3.2"/><rect x="16.9" y="4" width="6" height="3.2"/>
<rect x="1.1" y="8.7" width="6" height="3.2"/><rect x="8.9" y="8.7" width="6" height="3.2"/><rect x="16.9" y="8.7" width="6" height="3.2"/>
<rect x="1.1" y="13.2" width="6" height="3.3"/><rect x="8.9" y="13.2" width="6" height="3.3"/><rect x="16.9" y="13.2" width="6" height="3.3"/>
</g>
<rect x="0" y="0" width="0.9" height="19" fill="#7a8fb8"/><rect x="23.1" y="3" width="0.9" height="16" fill="#5a6f9c"/>
<rect x="0" y="17.6" width="24" height="1.4" fill="#44577f"/>
</svg>
<svg class="a" style="left:819px;top:103px" width="26" height="25"><g>
<rect x="7" y="0" width="17" height="17" fill="#1d3657"/>
<rect x="7" y="0" width="15" height="15" fill="#f4f7fd"/>
<rect x="7" y="0" width="17" height="5" fill="#2d7a83"/>
<rect x="7" y="0" width="17" height="2" fill="#4b9499"/>
<rect x="9" y="2" width="13" height="1" fill="#93d3dc"/>
<rect x="18" y="6" width="3" height="1.6" fill="#8d9ab5"/><rect x="18" y="9" width="3" height="1.6" fill="#8d9ab5"/><rect x="18" y="12" width="3" height="1.6" fill="#8d9ab5"/>
<rect x="0" y="6" width="16" height="17" fill="#1d3657"/>
<rect x="0" y="6" width="15" height="15" fill="#f4f7fd"/>
<rect x="0" y="6" width="16" height="5" fill="#2d7a83"/>
<rect x="0" y="6" width="16" height="2" fill="#4b9499"/>
<rect x="1" y="8" width="14" height="1" fill="#93d3dc"/>
<rect x="0" y="11" width="1" height="10" fill="#a7b3cb"/>
<rect x="3" y="12.3" width="3" height="1.6" fill="#8d9ab5"/><rect x="10" y="12.3" width="3" height="1.6" fill="#8d9ab5"/>
<rect x="3" y="15" width="3" height="1.6" fill="#8d9ab5"/>
<rect x="3" y="18" width="3" height="1.6" fill="#8d9ab5"/><rect x="10" y="18" width="3" height="1.6" fill="#8d9ab5"/>
<rect x="7" y="5" width="1.5" height="12" fill="#a7b3cb"/>
<rect x="8" y="15" width="16" height="2" fill="#1d3657"/>
</g></svg>
<div class="t" style="left:504px;top:107px;font-size:15.2px;color:#444">stocklevels</div>
<div class="t" style="left:677px;top:107px;font-size:15.2px;color:#444">StockLevels</div>
<div class="t" style="left:855px;top:107px;font-size:16.3px;font-weight:bold;color:#333">filter part from stocklist/allocation</div>
<svg class="a" style="left:608px;top:109px" width="12" height="12"><path d="M1,1 L11,11 M11,1 L1,11" stroke="#555" stroke-width="1.2"/></svg>
<svg class="a" style="left:786px;top:109px" width="12" height="12"><path d="M1,1 L11,11 M11,1 L1,11" stroke="#555" stroke-width="1.2"/></svg>
<svg class="a" style="left:1139px;top:109px" width="12" height="12"><path d="M1,1 L11,11 M11,1 L1,11" stroke="#555" stroke-width="1.2"/></svg>
<svg class="a" style="left:1896px;top:109px" width="13" height="13"><path d="M1,1 L12,12 M12,1 L1,12" stroke="#333" stroke-width="2.4"/></svg>
<div class="a" style="left:460px;top:133px;width:1279px;height:29px;background:#dee1e6"></div>
<div class="a" style="left:1739px;top:133px;width:181px;height:29px;background:#f5f6fb"></div>
<div class="a" style="left:487px;top:133px;width:141px;height:29px;background:linear-gradient(#ffd55f,#ffee73)"></div>
<svg class="a" style="left:460px;top:133px" width="26" height="28"><defs><linearGradient id="tri" x1="0" y1="0" x2="0" y2="1"><stop offset="0" stop-color="#fafbfd"/><stop offset="1" stop-color="#d3d8e2"/></linearGradient></defs><path d="M12.5,25 L23,14.5 L23,25 Z" fill="url(#tri)"/><path d="M12.2,25 L23,14.2" stroke="#a8c4ea" stroke-width="1.2"/></svg>
<div class="a" style="left:487px;top:162px;width:1252px;height:28px;background:#a6cdf0"></div>
<div class="a" style="left:487px;top:190px;width:1252px;height:1px;background:#c8cfe0"></div>
<div class="a" style="left:459px;top:162px;width:27px;height:28px;background:#fdd865"></div>
<div class="a" style="left:459px;top:190px;width:28px;height:1px;background:#a7abb1"></div>
<div class="a" style="left:487px;top:191px;width:1252px;height:28px;background:#f2f2f2"></div>
<div class="a" style="left:487px;top:219px;width:1252px;height:1px;background:#c8cfe0"></div>
<div class="a" style="left:459px;top:191px;width:27px;height:28px;background:#dee1e6"></div>
<div class="a" style="left:459px;top:219px;width:28px;height:1px;background:#a7abb1"></div>
<div class="a" style="left:487px;top:220px;width:1252px;height:28px;background:#ffffff"></div>
<div class="a" style="left:487px;top:248px;width:1252px;height:1px;background:#c8cfe0"></div>
<div class="a" style="left:459px;top:220px;width:27px;height:28px;background:#dee1e6"></div>
<div class="a" style="left:459px;top:248px;width:28px;height:1px;background:#a7abb1"></div>
<div class="a" style="left:487px;top:249px;width:1252px;height:28px;background:#f2f2f2"></div>
<div class="a" style="left:487px;top:277px;width:1252px;height:1px;background:#c8cfe0"></div>
<div class="a" style="left:459px;top:249px;width:27px;height:28px;background:#dee1e6"></div>
<div class="a" style="left:459px;top:277px;width:28px;height:1px;background:#a7abb1"></div>
<div class="a" style="left:487px;top:278px;width:1252px;height:28px;background:#ffffff"></div>
<div class="a" style="left:487px;top:306px;width:1252px;height:1px;background:#c8cfe0"></div>
<div class="a" style="left:459px;top:278px;width:27px;height:28px;background:#dee1e6"></div>
<div class="a" style="left:459px;top:306px;width:28px;height:1px;background:#a7abb1"></div>
<div class="a" style="left:487px;top:307px;width:1252px;height:28px;background:#f2f2f2"></div>
<div class="a" style="left:487px;top:335px;width:1252px;height:1px;background:#c8cfe0"></div>
<div class="a" style="left:459px;top:307px;width:27px;height:28px;background:#dee1e6"></div>
<div class="a" style="left:459px;top:335px;width:28px;height:1px;background:#a7abb1"></div>
<div class="a" style="left:487px;top:336px;width:1252px;height:28px;background:#ffffff"></div>
<div class="a" style="left:487px;top:364px;width:1252px;height:1px;background:#c8cfe0"></div>
<div class="a" style="left:459px;top:336px;width:27px;height:28px;background:#dee1e6"></div>
<div class="a" style="left:459px;top:364px;width:28px;height:1px;background:#a7abb1"></div>
<div class="a" style="left:487px;top:393px;width:1433px;height:1px;background:#eceef4"></div>
<div class="a" style="left:487px;top:422px;width:1433px;height:1px;background:#eceef4"></div>
<div class="a" style="left:487px;top:451px;width:1433px;height:1px;background:#eceef4"></div>
<div class="a" style="left:487px;top:480px;width:1433px;height:1px;background:#eceef4"></div>
<div class="a" style="left:487px;top:509px;width:1433px;height:1px;background:#eceef4"></div>
<div class="a" style="left:487px;top:538px;width:1433px;height:1px;background:#eceef4"></div>
<div class="a" style="left:487px;top:567px;width:1433px;height:1px;background:#eceef4"></div>
<div class="a" style="left:487px;top:596px;width:1433px;height:1px;background:#eceef4"></div>
<div class="a" style="left:487px;top:625px;width:1433px;height:1px;background:#eceef4"></div>
<div class="a" style="left:487px;top:654px;width:1433px;height:1px;background:#eceef4"></div>
<div class="a" style="left:487px;top:683px;width:1433px;height:1px;background:#eceef4"></div>
<div class="a" style="left:487px;top:712px;width:1433px;height:1px;background:#eceef4"></div>
<div class="a" style="left:487px;top:741px;width:1433px;height:1px;background:#eceef4"></div>
<div class="a" style="left:487px;top:770px;width:1433px;height:1px;background:#eceef4"></div>
<div class="a" style="left:487px;top:799px;width:1433px;height:1px;background:#eceef4"></div>
<div class="a" style="left:487px;top:828px;width:1433px;height:1px;background:#eceef4"></div>
<div class="a" style="left:487px;top:857px;width:1433px;height:1px;background:#eceef4"></div>
<div class="a" style="left:487px;top:886px;width:1433px;height:1px;background:#eceef4"></div>
<div class="a" style="left:487px;top:915px;width:1433px;height:1px;background:#eceef4"></div>
<div class="a" style="left:487px;top:944px;width:1433px;height:1px;background:#eceef4"></div>
<div class="a" style="left:459px;top:365px;width:27px;height:596px;background:#f3f5fc"></div>
<div class="a" style="left:459px;top:393px;width:28px;height:1px;background:#e4e7ef"></div>
<div class="a" style="left:459px;top:422px;width:28px;height:1px;background:#e4e7ef"></div>
<div class="a" style="left:459px;top:451px;width:28px;height:1px;background:#e4e7ef"></div>
<div class="a" style="left:459px;top:480px;width:28px;height:1px;background:#e4e7ef"></div>
<div class="a" style="left:459px;top:509px;width:28px;height:1px;background:#e4e7ef"></div>
<div class="a" style="left:459px;top:538px;width:28px;height:1px;background:#e4e7ef"></div>
<div class="a" style="left:459px;top:567px;width:28px;height:1px;background:#e4e7ef"></div>
<div class="a" style="left:459px;top:596px;width:28px;height:1px;background:#e4e7ef"></div>
<div class="a" style="left:459px;top:625px;width:28px;height:1px;background:#e4e7ef"></div>
<div class="a" style="left:459px;top:654px;width:28px;height:1px;background:#e4e7ef"></div>
<div class="a" style="left:459px;top:683px;width:28px;height:1px;background:#e4e7ef"></div>
<div class="a" style="left:459px;top:712px;width:28px;height:1px;background:#e4e7ef"></div>
<div class="a" style="left:459px;top:741px;width:28px;height:1px;background:#e4e7ef"></div>
<div class="a" style="left:459px;top:770px;width:28px;height:1px;background:#e4e7ef"></div>
<div class="a" style="left:459px;top:799px;width:28px;height:1px;background:#e4e7ef"></div>
<div class="a" style="left:459px;top:828px;width:28px;height:1px;background:#e4e7ef"></div>
<div class="a" style="left:459px;top:857px;width:28px;height:1px;background:#e4e7ef"></div>
<div class="a" style="left:459px;top:886px;width:28px;height:1px;background:#e4e7ef"></div>
<div class="a" style="left:459px;top:915px;width:28px;height:1px;background:#e4e7ef"></div>
<div class="a" style="left:459px;top:944px;width:28px;height:1px;background:#e4e7ef"></div>
<div class="a" style="left:486px;top:162px;width:1px;height:203px;background:#a7abb1"></div>
<div class="a" style="left:486px;top:365px;width:1px;height:596px;background:#e4e7ef"></div>
<div class="a" style="left:486px;top:133px;width:1px;height:29px;background:#d8dfeb"></div>
<div class="a" style="left:628px;top:133px;width:1px;height:29px;background:#b2b5bb"></div>
<div class="a" style="left:628px;top:162px;width:1px;height:203px;background:#c8cfe0"></div>
<div class="a" style="left:628px;top:365px;width:1px;height:596px;background:#eceef4"></div>
<div class="a" style="left:770px;top:133px;width:1px;height:29px;background:#b2b5bb"></div>
<div class="a" style="left:770px;top:162px;width:1px;height:203px;background:#c8cfe0"></div>
<div class="a" style="left:770px;top:365px;width:1px;height:596px;background:#eceef4"></div>
<div class="a" style="left:957px;top:133px;width:1px;height:29px;background:#b2b5bb"></div>
<div class="a" style="left:957px;top:162px;width:1px;height:203px;background:#c8cfe0"></div>
<div class="a" style="left:957px;top:365px;width:1px;height:596px;background:#eceef4"></div>
<div class="a" style="left:1166px;top:133px;width:1px;height:29px;background:#b2b5bb"></div>
<div class="a" style="left:1166px;top:162px;width:1px;height:203px;background:#c8cfe0"></div>
<div class="a" style="left:1166px;top:365px;width:1px;height:596px;background:#eceef4"></div>
<div class="a" style="left:1308px;top:133px;width:1px;height:29px;background:#b2b5bb"></div>
<div class="a" style="left:1308px;top:162px;width:1px;height:203px;background:#c8cfe0"></div>
<div class="a" style="left:1308px;top:365px;width:1px;height:596px;background:#eceef4"></div>
<div class="a" style="left:1450px;top:133px;width:1px;height:29px;background:#b2b5bb"></div>
<div class="a" style="left:1450px;top:162px;width:1px;height:203px;background:#c8cfe0"></div>
<div class="a" style="left:1450px;top:365px;width:1px;height:596px;background:#eceef4"></div>
<div class="a" style="left:1739px;top:133px;width:1px;height:29px;background:#b2b5bb"></div>
<div class="a" style="left:1739px;top:162px;width:1px;height:203px;background:#c8cfe0"></div>
<div class="a" style="left:1739px;top:365px;width:1px;height:596px;background:#eceef4"></div>
<div class="a" style="left:1881px;top:133px;width:1px;height:828px;background:#eceef4"></div>
<div class="t" style="left:512.7px;top:137px;font-size:20px;color:#333;letter-spacing:-0.667px">StockID</div>
<svg class="a" style="left:607px;top:144px" width="15" height="9"><path d="M1,1 h13 M3,2.5 h9 M5,4.5 h5 M6.5,6.5 h2" stroke="#fff" stroke-width="2"/><path d="M3.5,2 h8 v1.5 l-2.5,2.5 v1.5 h-2 v-1.5 l-2.5,-2.5 Z" fill="#1c1f26"/></svg>
<div class="t" style="left:651.7px;top:137px;font-size:20px;color:#333;letter-spacing:-0.550px">StockNo</div>
<svg class="a" style="left:749px;top:144px" width="15" height="9"><path d="M1,1 h13 M3,2.5 h9 M5,4.5 h5 M6.5,6.5 h2" stroke="#fff" stroke-width="2"/><path d="M3.5,2 h8 v1.5 l-2.5,2.5 v1.5 h-2 v-1.5 l-2.5,-2.5 Z" fill="#1c1f26"/></svg>
<div class="t" style="left:810.4px;top:137px;font-size:20px;color:#333;letter-spacing:-1.029px">StockQTY</div>
<svg class="a" style="left:936px;top:144px" width="15" height="9"><path d="M1,1 h13 M3,2.5 h9 M5,4.5 h5 M6.5,6.5 h2" stroke="#fff" stroke-width="2"/><path d="M3.5,2 h8 v1.5 l-2.5,2.5 v1.5 h-2 v-1.5 l-2.5,-2.5 Z" fill="#1c1f26"/></svg>
<div class="t" style="left:994.5px;top:137px;font-size:20px;color:#333;letter-spacing:0.333px">OnOrderQty</div>
<svg class="a" style="left:1145px;top:144px" width="15" height="9"><path d="M1,1 h13 M3,2.5 h9 M5,4.5 h5 M6.5,6.5 h2" stroke="#fff" stroke-width="2"/><path d="M3.5,2 h8 v1.5 l-2.5,2.5 v1.5 h-2 v-1.5 l-2.5,-2.5 Z" fill="#1c1f26"/></svg>
<div class="t" style="left:1181.3px;top:137px;font-size:20px;color:#333;letter-spacing:0.256px">Allocation</div>
<svg class="a" style="left:1287px;top:144px" width="15" height="9"><path d="M1,1 h13 M3,2.5 h9 M5,4.5 h5 M6.5,6.5 h2" stroke="#fff" stroke-width="2"/><path d="M3.5,2 h8 v1.5 l-2.5,2.5 v1.5 h-2 v-1.5 l-2.5,-2.5 Z" fill="#1c1f26"/></svg>
<div class="t" style="left:1327.4px;top:137px;font-size:20px;color:#333;letter-spacing:0.150px">allocated</div>
<svg class="a" style="left:1429px;top:144px" width="15" height="9"><path d="M1,1 h13 M3,2.5 h9 M5,4.5 h5 M6.5,6.5 h2" stroke="#fff" stroke-width="2"/><path d="M3.5,2 h8 v1.5 l-2.5,2.5 v1.5 h-2 v-1.5 l-2.5,-2.5 Z" fill="#1c1f26"/></svg>
<div class="t" style="left:1546.3px;top:137px;font-size:20px;color:#333;letter-spacing:0.600px">batchno</div>
<svg class="a" style="left:1718px;top:144px" width="15" height="9"><path d="M1,1 h13 M3,2.5 h9 M5,4.5 h5 M6.5,6.5 h2" stroke="#fff" stroke-width="2"/><path d="M3.5,2 h8 v1.5 l-2.5,2.5 v1.5 h-2 v-1.5 l-2.5,-2.5 Z" fill="#1c1f26"/></svg>
<div class="a" style="left:486px;top:161px;width:143px;height:31px;border:1.5px solid #f4a0a4;background:#fff"></div>
<div class="a" style="left:606px;top:163px;width:21px;height:27px;background:#000"></div>
<div class="gc" style="left:487px;width:139px;text-align:right;top:168px;color:#fff">18</div>
<div class="gc" style="left:632px;top:168px;color:#000">GT2920</div>
<div class="gc" style="left:770px;width:185px;text-align:right;top:168px;color:#000">1050</div>
<div class="gc" style="left:961px;top:168px;color:#000">0</div>
<div class="gc" style="left:1170px;top:168px;color:#000">900</div>
<div class="gc" style="left:1454px;top:168px;color:#000">PCO00006, PCO00008</div>
<div class="a" style="left:1367px;top:163px;width:27px;height:27px;background:#fff;border:1.5px solid #2a2a2a"></div>
<div class="gc" style="left:487px;width:139px;text-align:right;top:197px;color:#222">18</div>
<div class="gc" style="left:632px;top:197px;color:#222">GT2920</div>
<div class="gc" style="left:770px;width:185px;text-align:right;top:197px;color:#222">1050</div>
<div class="gc" style="left:961px;top:197px;color:#222">0</div>
<div class="gc" style="left:1170px;top:197px;color:#222">900</div>
<div class="gc" style="left:1454px;top:197px;color:#222">PCO00006, PCO00008</div>
<div class="a" style="left:1367px;top:192px;width:27px;height:27px;background:#fff;border:1.5px solid #2a2a2a"></div>
<div class="gc" style="left:487px;width:139px;text-align:right;top:226px;color:#222">19</div>
<div class="gc" style="left:632px;top:226px;color:#222">GT2920</div>
<div class="gc" style="left:770px;width:185px;text-align:right;top:226px;color:#222">150</div>
<div class="gc" style="left:961px;top:226px;color:#222">0</div>
<div class="gc" style="left:1170px;top:226px;color:#222">50</div>
<div class="gc" style="left:1454px;top:226px;color:#222">PCO00007</div>
<div class="a" style="left:1367px;top:221px;width:27px;height:27px;background:#fff;border:1.5px solid #2a2a2a"></div>
<div class="gc" style="left:487px;width:139px;text-align:right;top:255px;color:#222">20</div>
<div class="gc" style="left:632px;top:255px;color:#222">GT2920</div>
<div class="gc" style="left:770px;width:185px;text-align:right;top:255px;color:#222">150</div>
<div class="gc" style="left:961px;top:255px;color:#222">0</div>
<div class="gc" style="left:1170px;top:255px;color:#222">50</div>
<div class="gc" style="left:1454px;top:255px;color:#222">PCO00007</div>
<div class="a" style="left:1367px;top:250px;width:27px;height:27px;background:#fff;border:1.5px solid #2a2a2a"></div>
<div class="gc" style="left:487px;width:139px;text-align:right;top:284px;color:#222">24</div>
<div class="gc" style="left:632px;top:284px;color:#222">GT2920</div>
<div class="gc" style="left:770px;width:185px;text-align:right;top:284px;color:#222">60</div>
<div class="gc" style="left:961px;top:284px;color:#222">100</div>
<div class="gc" style="left:1170px;top:284px;color:#222">30</div>
<div class="gc" style="left:1454px;top:284px;color:#222"></div>
<div class="a" style="left:1367px;top:279px;width:27px;height:27px;background:#fff;border:1.5px solid #2a2a2a"></div>
<div class="gc" style="left:487px;width:139px;text-align:right;top:313px;color:#222">26</div>
<div class="gc" style="left:632px;top:313px;color:#222">GT2920</div>
<div class="gc" style="left:770px;width:185px;text-align:right;top:313px;color:#222">130</div>
<div class="gc" style="left:961px;top:313px;color:#222">0</div>
<div class="gc" style="left:1170px;top:313px;color:#222">130</div>
<div class="gc" style="left:1454px;top:313px;color:#222"></div>
<div class="a" style="left:1367px;top:308px;width:27px;height:27px;background:#fff;border:1.5px solid #2a2a2a"></div>
<div class="gc" style="left:487px;width:139px;text-align:right;top:342px">(New)</div>
<div class="a" style="left:1367px;top:337px;width:27px;height:27px;background:#fff;border:1.5px solid #2a2a2a"></div>
<div class="a" style="left:1374px;top:344px;width:13px;height:13px;background:#333"></div>
<div class="a" style="left:461px;top:341px;width:19px;height:16px;background:#d7dedf"></div>
<svg class="a" style="left:464px;top:341px" width="16" height="16"><g stroke="#3a3a3a"><line x1="7.5" y1="1" x2="7.5" y2="15" stroke-width="1.6"/><line x1="1" y1="8" x2="14" y2="8" stroke-width="1.6"/><line x1="3" y1="3.5" x2="12" y2="12.5" stroke-width="1.2"/><line x1="12" y1="3.5" x2="3" y2="12.5" stroke-width="1.2"/></g></svg>
<div class="a" style="left:460px;top:961px;width:1460px;height:26px;background:linear-gradient(#f3f4f6 0,#f3f4f6 50%,#e6e7ea 50%,#e6e7ea 100%)"></div>
<div class="a" style="left:460px;top:961px;width:1460px;height:1px;background:#a4a8ae"></div>
<div class="a" style="left:1918px;top:961px;width:1px;height:26px;background:#a4a8ae"></div>
<div class="t" style="left:466px;top:969px;font-size:14.5px;color:#555">Record:</div>
<svg class="a" style="left:520px;top:965px" width="210" height="20"><g fill="#333"><rect x="6" y="5" width="1.6" height="10"/><path d="M16,5 v10 l-7,-5 Z"/></g><path d="M37,5 v10 l-6,-5 Z" fill="#b9bcc2"/><g fill="#333"><path d="M134,5 v10 l7,-5 Z"/><path d="M159,5 v10 l7,-5 Z"/><rect x="168" y="5" width="1.6" height="10"/><path d="M180,5 v10 l7,-5 Z"/></g><g stroke="#f0b060" stroke-width="1.5"><line x1="194" y1="4" x2="194" y2="16"/><line x1="188" y1="10" x2="200" y2="10"/><line x1="189.8" y1="5.8" x2="198.2" y2="14.2"/><line x1="198.2" y1="5.8" x2="189.8" y2="14.2"/></g><circle cx="194" cy="10" r="3" fill="#f0b060"/></svg>
<div class="a" style="left:568px;top:963px;width:75px;height:24px;background:#fff;border:1px solid #c9cbd0"></div>
<div class="t" style="left:571px;top:968px;font-size:15.5px;color:#111">1 of 6</div>
<div class="a" style="left:726px;top:962px;width:1px;height:25px;background:#a4a8ae"></div>
<div class="a" style="left:843px;top:962px;width:1px;height:25px;background:#a4a8ae"></div>
<svg class="a" style="left:738px;top:963px" width="30" height="25"><path d="M2.5,1.5 H25.5 V4 L17,13 M2.5,1.5 V4 L11,13 V24" fill="none" stroke="#9c9c9c" stroke-width="1.6"/><path d="M15,16 L24.5,24.5 M24.5,16 L15,24.5" stroke="#9c9c9c" stroke-width="1.4"/></svg>
<div class="t" style="left:768px;top:969px;font-size:15.5px;color:#a9a9a9">No Filter</div>
<div class="a" style="left:850px;top:963px;width:105px;height:24px;background:#fff;border:1px solid #c9cbd0"></div>
<div class="t" style="left:852px;top:968px;font-size:15.5px;color:#000">Search</div>
<div class="a" style="left:0;top:987px;width:1920px;height:1px;background:#cdcfd2"></div>
<div class="t" style="left:11px;top:997px;font-size:15.3px;color:#505050">Datasheet View</div>
<div class="t" style="left:1642px;top:997px;font-size:15.4px;color:#444">Num Lock</div>
<div class="a" style="left:1739px;top:987px;width:60px;height:33px;background:#d2d2d2"></div>
<svg class="a" style="left:1756px;top:991px" width="26" height="26"><g fill="none" stroke="#444" stroke-width="1.4"><rect x="1.7" y="1.7" width="21" height="21"/><line x1="1.7" y1="8.5" x2="22.7" y2="8.5"/><line x1="1.7" y1="13" x2="22.7" y2="13"/><line x1="1.7" y1="17.5" x2="22.7" y2="17.5"/><line x1="12.2" y1="8.5" x2="12.2" y2="22.7"/></g><path d="M5,4 h6 l-3,3 Z M13.5,4 h6 l-3,3 Z" fill="#444"/></svg>
<div class="t" style="left:1816px;top:996px;font-size:14.8px;color:#444;letter-spacing:-1px">SQL</div>
<svg class="a" style="left:1875px;top:990px" width="30" height="28"><g fill="none" stroke="#444" stroke-width="1.5"><path d="M2.5,2.5 L25.5,25.5 H2.5 Z"/><path d="M8,15 L13,20 H8 Z"/><path d="M17,2 h9 v24"/><path d="M21,6 h5 M23,9 h3 M21,12 h5 M23,15 h3 M21,18 h5"/></g></svg>
<div class="a" style="left:0;top:1020px;width:1920px;height:60px;background:linear-gradient(90deg,#213a43 0,#21383f 45%,#1d3044 70%,#1a2a45 100%)"></div>
<svg class="a" style="left:23px;top:1037px" width="26" height="26"><g fill="#fff"><path d="M0.5,4 L11,2.6 V12 H0.5 Z"/><path d="M12.3,2.4 L25,0.6 V12 H12.3 Z"/><path d="M0.5,13.3 H11 V22.6 L0.5,21.2 Z"/><path d="M12.3,13.3 H25 V24.6 L12.3,22.8 Z"/></g></svg>
<div class="a" style="left:72px;top:1020px;width:516px;height:60px;background:#f2f2f2;border:2px solid #c9c9c9"></div>
<svg class="a" style="left:88px;top:1036px" width="28" height="28"><circle cx="17" cy="11" r="8" fill="none" stroke="#222" stroke-width="1.8"/><line x1="11.5" y1="16.5" x2="2" y2="26" stroke="#222" stroke-width="1.8"/></svg>
<div class="t" style="left:132px;top:1042px;font-size:22.3px;color:#222">Type here to search</div>
<svg class="a" style="left:470px;top:1020px" width="120" height="60"><defs><linearGradient id="pg" x1="0" y1="0" x2="1" y2="0.6"><stop offset="0" stop-color="#ee8a2e"/><stop offset="0.6" stop-color="#f7b52a"/><stop offset="1" stop-color="#ffe04a"/></linearGradient></defs><circle cx="21.5" cy="40.3" r="3.2" fill="#6ad6e8"/><circle cx="32" cy="27.2" r="3.1" fill="#ffaa10"/><rect x="47.2" y="9" width="21" height="27" rx="10" ry="10" fill="url(#pg)"/><path d="M37.2,51 Q40,37 53,35.5 L63,35.5 Q76,37 78.2,51 Z" fill="url(#pg)"/><line x1="80" y1="43" x2="86" y2="48.5" stroke="#3d3fd0" stroke-width="5.5" stroke-linecap="round"/><circle cx="70" cy="37.2" r="9" fill="#abe5f3" stroke="#1550dd" stroke-width="2.2"/><ellipse cx="70.5" cy="33.5" rx="2.5" ry="2" fill="#e6f8fc"/><path d="M91.5,19 L93.5,23.5 L98.5,24.5 L94,27 L93.5,32 L90.5,28 L86,26.5 L90,23.5 Z" fill="#e27ae8"/></svg>
<svg class="a" style="left:608px;top:1034px" width="32" height="32"><circle cx="16" cy="16" r="10.5" fill="none" stroke="#fff" stroke-width="2.6"/></svg>
<div class="a" style="left:665px;top:1020px;width:73px;height:60px;background:#4b5f67"></div>
<div class="a" style="left:665px;top:1077px;width:73px;height:3px;background:#76b9ed"></div>
<svg class="a" style="left:680px;top:1030px" width="42" height="40"><path d="M10.8,7.3 v25.5 a13.6,4.3 0 0 0 27.2,0 v-27 Z" fill="#8c1424"/><path d="M10.8,7.3 v18 a13.6,4.3 0 0 0 27.2,0 v-19 Z" fill="#b01f32"/><path d="M10.8,7.3 v10.5 a13.6,4.3 0 0 0 27.2,0 v-11 Z" fill="#c94b5c"/><ellipse cx="24.4" cy="7.3" rx="13.6" ry="4.3" fill="#e07f90"/><rect x="3" y="11" width="18" height="18" rx="1.5" fill="#b81e30"/><path d="M7.2,25 L10.8,15 h2.4 L16.8,25 h-2.5 l-0.8,-2.4 h-3.1 l-0.8,2.4 Z M10.9,20.7 h2.2 l-1.1,-3.4 Z" fill="#fff"/></svg>
<div class="a" style="left:907px;top:1020px;width:26px;height:60px;background:#f0f0f0"></div>
<svg class="a" style="left:907px;top:1020px" width="26" height="60"><g fill="none" stroke="#333" stroke-width="1.8"><path d="M7,18 l6,-6 l6,6"/><path d="M7,44 l6,6 l6,-6"/></g></svg>
<div class="t" style="left:943px;top:1043px;font-size:17.8px;color:#e0e0e0">Address</div>
<div class="a" style="left:1014px;top:1028px;width:368px;height:45px;background:#fff"></div>
<div class="a" style="left:1335px;top:1028px;width:1px;height:45px;background:#d6d6d6"></div>
<svg class="a" style="left:1300px;top:1043px" width="20" height="14"><path d="M4,4 l6,6 l6,-6" fill="none" stroke="#444" stroke-width="1.4"/></svg>
<svg class="a" style="left:1347px;top:1038px" width="26" height="26"><path d="M18.5,7 A8,8 0 1 1 8,7.5" fill="none" stroke="#777" stroke-width="2.6"/><path d="M5,3 L12,4 L8,11 Z" fill="#777" transform="rotate(-10 8 7)"/></svg>
<svg class="a" style="left:1400px;top:1025px" width="50" height="50"><defs><linearGradient id="ug" x1="0" y1="0" x2="1" y2="0"><stop offset="0" stop-color="#cde8fc"/><stop offset="1" stop-color="#3fa2f0"/></linearGradient></defs><line x1="22.5" y1="13.6" x2="22.5" y2="16" stroke="#9a918a" stroke-width="1.2"/><path d="M7.6,28.4 A14.7,13.2 0 0 1 37,28.4 Z" fill="url(#ug)"/><path d="M15,16.5 Q13,22 15,28.4 M30,16.5 Q32,22 30,28.4" stroke="#7fb8e6" stroke-width="0.6" fill="none"/><path d="M22.5,28.4 V37.5 Q22.5,41.2 19.2,41.2 Q16.2,41.2 16.2,37.5" fill="none" stroke="#9a918a" stroke-width="2.2"/><g stroke="#55b0f3" stroke-width="2" stroke-linecap="round"><line x1="26.6" y1="8.5" x2="23.8" y2="12.3"/><line x1="33.2" y1="7.4" x2="30.4" y2="11.2"/><line x1="35.2" y1="13.1" x2="32.4" y2="16.9"/><line x1="41.7" y1="12.6" x2="38.9" y2="16.4"/><line x1="41.7" y1="19.4" x2="38.9" y2="23.2"/></g><circle cx="38" cy="38" r="5.1" fill="#e0112b"/></svg>
<div class="t" style="left:1456px;top:1042.6px;font-size:20.5px;color:#fff;letter-spacing:-0.5px">Rain...</div>
<svg class="a" style="left:1535px;top:1040px" width="22" height="16"><path d="M2,13 l9,-9 l9,9" fill="none" stroke="#fff" stroke-width="1.5"/></svg>
<svg class="a" style="left:1569px;top:1040px" width="28" height="20"><g fill="none" stroke="#fff" stroke-width="1.3"><rect x="6.5" y="5.5" width="18" height="11"/><path d="M2.5,1 v4 M6.5,1 v4 M1,5.5 h7 v3 a3.5,3.5 0 0 1 -7,0 Z M4.5,12 v5"/></g><rect x="7" y="12" width="4" height="4" fill="#fff"/></svg>
<svg class="a" style="left:1608px;top:1040px" width="24" height="22"><g fill="none" stroke="#fff" stroke-width="1.3"><path d="M2.5,20 a16.5,16.5 0 0 1 16.5,-16.5"/><path d="M7.5,20 a11.5,11.5 0 0 1 11.5,-11.5"/><path d="M12.5,20 a6.5,6.5 0 0 1 6.5,-6.5"/></g><circle cx="18" cy="18" r="1.8" fill="#fff"/></svg>
<svg class="a" style="left:1641px;top:1039px" width="28" height="22"><g fill="none" stroke="#fff" stroke-width="1.3"><path d="M2.5,7.5 h4 l6,-5 v17 l-6,-5 h-4 Z"/><path d="M16,8 a4,4 0 0 1 0,6"/><path d="M19,5 a8,8 0 0 1 0,12"/><path d="M22,2 a12,12 0 0 1 0,18"/></g></svg>
<div class="t" style="left:1682px;top:1042px;font-size:17.3px;color:#fff;letter-spacing:-0.6px">ENG</div>
<div class="t" style="left:1762px;top:1029px;font-size:17px;color:#fff">12:30</div>
<div class="t" style="left:1737px;top:1056px;font-size:17.3px;color:#fff;letter-spacing:0.6px">12/09/2022</div>
<svg class="a" style="left:1856px;top:1036px" width="30" height="30"><path d="M25.3,15.5 V2.9 H2.9 V20.2 H9.3 L14.5,25.4" fill="none" stroke="#fff" stroke-width="1.4"/><path d="M22,15.6 A5.6,5.6 0 1 1 15.8,22.6 A6.8,6.8 0 0 0 22,15.6 Z" fill="none" stroke="#fff" stroke-width="1.3"/></svg>
<div class="a" style="left:1912px;top:1020px;width:2px;height:60px;background:#7d8697"></div>
</body></html>
